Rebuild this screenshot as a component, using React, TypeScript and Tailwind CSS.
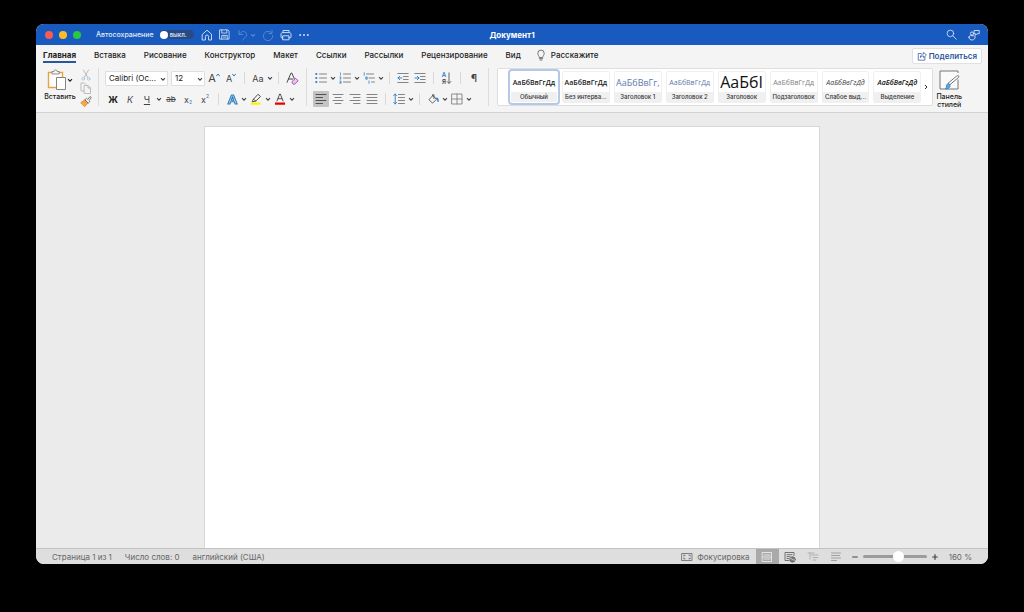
import { useState } from "react";
import type { ReactNode } from "react";
import clsx from "clsx";

const TABS = [
  "Главная",
  "Вставка",
  "Рисование",
  "Конструктор",
  "Макет",
  "Ссылки",
  "Рассылки",
  "Рецензирование",
  "Вид",
];

const STYLES = [
  { label: "Обычный", sample: "АаБбВвГгДд", look: "text-[7px] font-semibold text-[#222]" },
  { label: "Без интерва...", sample: "АаБбВвГгДд", look: "text-[7px] font-semibold text-[#222]" },
  { label: "Заголовок 1", sample: "АаБбВвГг,", look: "text-[9px] text-[#5b7ca8]" },
  { label: "Заголовок 2", sample: "АаБбВвГгДд", look: "text-[7px] font-medium text-[#5b7ca8]" },
  { label: "Заголовок", sample: "АаБбІ", look: "text-[16px] text-[#111]" },
  { label: "Подзаголовок", sample: "АаБбВвГгДд", look: "text-[7px] font-medium text-[#808080]" },
  { label: "Слабое выд...", sample: "АаБбВвГгДд", look: "text-[7px] font-medium italic text-[#444]" },
  { label: "Выделение", sample: "АаБбВвГгДд", look: "text-[7px] font-semibold italic text-[#111]" },
];

function Icon({ children, size = 12, className }: { children: ReactNode; size?: number; className?: string }) {
  return (
    <svg
      width={size}
      height={size}
      viewBox="0 0 12 12"
      fill="none"
      stroke="currentColor"
      strokeWidth="0.9"
      strokeLinecap="round"
      strokeLinejoin="round"
      className={clsx("shrink-0", className)}
      aria-hidden="true"
    >
      {children}
    </svg>
  );
}

function Chevron() {
  return (
    <svg width="6" height="6" viewBox="0 0 6 6" fill="none" stroke="currentColor" strokeWidth="1.1" aria-hidden="true">
      <path d="M1 2.200 3 4.200l2-2" />
    </svg>
  );
}

function Tool({ label, active, children }: { label: string; active?: boolean; children: ReactNode }) {
  return (
    <button
      type="button"
      aria-label={label}
      className={clsx(
        "flex h-4 w-4 shrink-0 items-center justify-center rounded-[1px] leading-none",
        active && "bg-[#c4c4c4]",
      )}
    >
      {children}
    </button>
  );
}

function Drop({ label }: { label: string }) {
  return (
    <button type="button" aria-label={label} className="-ml-px flex h-4 w-[7px] shrink-0 items-center justify-center text-[#444]">
      <Chevron />
    </button>
  );
}

function Sep() {
  return <span className="mx-1 h-3 w-px shrink-0 bg-[#d9d9d9]" />;
}

function GroupSep() {
  return <span className="h-[38px] w-px shrink-0 bg-[#dcdcdc]" />;
}

function TitleBar() {
  return (
    <header className="grid h-[21px] shrink-0 grid-cols-[1fr_auto_1fr] items-center bg-[#185abd] px-2 text-white">
      <div className="flex items-center">
        <div className="flex gap-[6px] pl-px">
          <button type="button" aria-label="Закрыть" className="size-2 rounded-full bg-[#fc5b57]" />
          <button type="button" aria-label="Свернуть" className="size-2 rounded-full bg-[#fdbc2e]" />
          <button type="button" aria-label="Развернуть" className="size-2 rounded-full bg-[#28c840]" />
        </div>
        <label className="ml-[15px] flex items-center gap-[6px] text-[7px] font-medium leading-[9px] text-[#e3ecf8]">
          Автосохранение
          <input type="checkbox" className="peer sr-only" />
          <span className="flex h-[9px] w-[34px] items-center gap-[2px] rounded-full bg-[#2a4a86] text-[6px] font-semibold text-[#d5e0f2]">
            <span className="size-2 rounded-full bg-white" />
            выкл.
          </span>
        </label>
        <div className="ml-[7px] flex items-center gap-[6px] text-[#dbe6f7]">
          <button type="button" aria-label="Домой">
            <Icon>
              <path d="M1.500 5.200 6 1.200l4.500 4V11H7.600V7.600a1.600 1.600 0 0 0-3.200 0V11H1.500z" />
            </Icon>
          </button>
          <button type="button" aria-label="Сохранить">
            <Icon size={11}>
              <path d="M1 1h8.600L11 2.400V11H1zM3 1v3.400h5.600V1M3 11V7h6v4M4.600 8.800h2.800" />
            </Icon>
          </button>
          <div className="flex items-center gap-px pl-px text-[#5d8bd2]">
            <button type="button" aria-label="Отменить">
              <Icon>
                <path d="M2 1.500v4h4M2.200 5.300C4 2.600 6.500 1.800 8.400 3.100c2 1.500 1.500 3.700 0 5.200L5.600 11" />
              </Icon>
            </button>
            <Chevron />
          </div>
          <button type="button" aria-label="Повторить" className="text-[#5d8bd2]">
            <Icon>
              <path d="M10 1.500v3H7M9.900 4.300A4.700 4.700 0 1 0 10.700 6.500" />
            </Icon>
          </button>
          <button type="button" aria-label="Печать">
            <Icon>
              <path d="M3 3.600V1.500h6v2.100M3 8.800H1.800A.8.800 0 0 1 1 8V5.200c0-.9.7-1.600 1.600-1.600h6.800c.9 0 1.600.7 1.600 1.600V8a.8.800 0 0 1-.8.800H9M3 6.800h6v4H3z" />
            </Icon>
          </button>
          <button type="button" aria-label="Ещё">
            <Icon>
              <path d="M2.200 6h.01M6 6h.01M9.800 6h.01" strokeWidth="1.900" />
            </Icon>
          </button>
        </div>
      </div>
      <h1 className="text-[8px] font-bold">Документ1</h1>
      <div className="flex items-center justify-end gap-[11px] text-[#dbe6f7]">
        <button type="button" aria-label="Поиск">
          <Icon size={11}>
            <circle cx="4.800" cy="4.800" r="3.600" />
            <path d="m7.500 7.500 3.700 3.700" />
          </Icon>
        </button>
        <button type="button" aria-label="Совместная работа">
          <Icon>
            <circle cx="4" cy="4.500" r="1.600" />
            <path d="M1 8.200c0-1 .6-1.500 1.500-1.500h3.300c.8 0 1.300.5 1.300 1.200 0 2-1.300 3.100-3 3.100S1 10 1 8.200zM6.500 1.500h4.700v3.300H9L7.500 6.200V4.800h-1z" />
          </Icon>
        </button>
      </div>
    </header>
  );
}

function TabRow() {
  const [current, setCurrent] = useState("Главная");
  return (
    <nav className="flex h-[21px] shrink-0 items-start pl-[7px] pr-[6px] text-[8px] font-medium text-[#222]">
      <div className="flex gap-[18px]">
        {TABS.map((tab) => (
          <button
            key={tab}
            type="button"
            onClick={() => setCurrent(tab)}
            className={clsx(
              "h-[18px] whitespace-nowrap border-b-2 pt-[3px]",
              tab === current ? "border-[#2b579a] font-bold" : "border-transparent",
            )}
          >
            {tab}
          </button>
        ))}
      </div>
      <button type="button" className="ml-[14px] flex h-[18px] items-center gap-1 pt-px">
        <Icon className="text-[#666]">
          <path d="M4.300 8.200C4.300 6.900 2.800 6.200 2.800 4.300a3.200 3.200 0 0 1 6.400 0c0 1.900-1.500 2.600-1.500 3.900zM4.500 9.600h3M5 11h2" />
        </Icon>
        Расскажите
      </button>
      <button
        type="button"
        className="ml-auto mt-[3px] flex h-4 items-center gap-[2px] rounded-[2px] border border-[#e1e1e1] bg-white px-1 font-semibold text-[#2b579a]"
      >
        <Icon size={10}>
          <path d="M5 3H1.500v8h8V7.500M4 7.500c.3-2.600 1.800-4 4-4V1.600L11.300 5 8 8V6C6.300 6 5 6.400 4 7.500z" />
        </Icon>
        Поделиться
      </button>
    </nav>
  );
}

function Clipboard() {
  return (
    <div className="flex shrink-0 gap-1 pt-px">
      <div className="flex w-8 flex-col items-center">
        <div className="flex items-center">
          <button type="button" aria-label="Вставить">
            <svg width="20" height="22" viewBox="0 0 20 22" fill="none" aria-hidden="true">
              <path d="M1.500 3.500h14v15h-14z" fill="#fff" stroke="#e8a33d" strokeWidth="1.400" />
              <path d="M5 5V2.500h2a1.600 1.600 0 0 1 3.200 0h2V5z" fill="#f4f4f4" stroke="#777" strokeWidth="0.800" />
              <path d="M9.500 8.500h9v12h-9z" fill="#fff" stroke="#777" strokeWidth="0.900" />
            </svg>
          </button>
          <Chevron />
        </div>
        <span className="mt-[2px] text-[7px] font-medium leading-[8px]">Вставить</span>
      </div>
      <div className="flex flex-col items-center gap-px">
        <button type="button" aria-label="Вырезать" className="text-[#b5b5b5]">
          <Icon>
            <path d="m3.500 1 4.300 7.500M8.500 1 4.200 8.500" />
            <circle cx="3.300" cy="9.800" r="1.300" stroke="#a9c6e2" />
            <circle cx="8.700" cy="9.800" r="1.300" stroke="#a9c6e2" />
          </Icon>
        </button>
        <button type="button" aria-label="Копировать" className="text-[#b5b5b5]">
          <Icon>
            <path d="M4 9H1V1h3.500L6 2.500M4.500 3.500H8L10.500 6v5.500h-6zM8 3.500V6h2.500" />
          </Icon>
        </button>
        <button type="button" aria-label="Формат по образцу">
          <Icon>
            <path d="M1 7.500 5 4.800l3 3.100-3.200 3.600z" fill="#f3a64b" stroke="#e08e2c" />
            <path d="m5.200 4.500 1.300-1.200 1.300 1.200 2.200-3 1.300 1.100-2.200 2.800.8 1.200-1.400 1.300z" fill="#fff" stroke="#555" strokeWidth="0.800" />
          </Icon>
        </button>
      </div>
    </div>
  );
}

function FontGroup() {
  return (
    <div className="flex shrink-0 flex-col gap-[5px] pt-[2px] text-[#444]">
      <div className="flex h-4 items-center gap-px">
        <div className="relative mr-[2px]">
          <select
            aria-label="Шрифт"
            className="block h-[15px] w-[63px] appearance-none rounded-[1px] border border-[#dedede] bg-white pl-[3px] text-[8px] leading-none text-[#222]"
          >
            <option>Calibri (Ос...</option>
          </select>
          <span className="pointer-events-none absolute right-[2px] top-[5px]">
            <Chevron />
          </span>
        </div>
        <div className="relative">
          <select
            aria-label="Размер шрифта"
            className="block h-[15px] w-[34px] appearance-none rounded-[1px] border border-[#dedede] bg-white pl-[3px] text-[8px] leading-none text-[#222]"
          >
            <option>12</option>
          </select>
          <span className="pointer-events-none absolute right-[2px] top-[5px]">
            <Chevron />
          </span>
        </div>
        <Tool label="Увеличить размер">
          <span className="text-[11px]">A</span>
          <Icon size={4} className="mb-[6px] text-[#2b7cc4]">
            <path d="m1 9 5-6 5 6" strokeWidth="3" />
          </Icon>
        </Tool>
        <Tool label="Уменьшить размер">
          <span className="text-[9px]">A</span>
          <Icon size={4} className="mb-[6px] text-[#2b7cc4]">
            <path d="m1 3 5 6 5-6" strokeWidth="3" />
          </Icon>
        </Tool>
        <Sep />
        <Tool label="Регистр">
          <span className="text-[9px]">Aa</span>
        </Tool>
        <Drop label="Варианты регистра" />
        <Sep />
        <Tool label="Очистить формат">
          <Icon size={13}>
            <path d="M1 9.500 4.600 1h.8l2.400 5.500M2.300 6.500h3.900" />
            <path d="m5.600 8.900 3.200-3.200 2.400 2.400L8 11.200H7z" fill="#e7c8ea" stroke="#a64fb0" />
          </Icon>
        </Tool>
      </div>
      <div className="flex h-4 items-center gap-px">
        <Tool label="Полужирный">
          <span className="text-[9px] font-bold text-[#222]">Ж</span>
        </Tool>
        <Tool label="Курсив">
          <span className="text-[9px] italic">К</span>
        </Tool>
        <Tool label="Подчёркнутый">
          <span className="text-[9px] underline">Ч</span>
        </Tool>
        <Drop label="Варианты подчёркивания" />
        <Tool label="Зачёркнутый">
          <span className="text-[8px] line-through">ab</span>
        </Tool>
        <Tool label="Подстрочный">
          <span className="text-[9px]">x</span>
          <span className="mt-[6px] text-[5px] text-[#2b7cc4]">2</span>
        </Tool>
        <Tool label="Надстрочный">
          <span className="text-[9px]">x</span>
          <span className="mb-[6px] text-[5px] text-[#2b7cc4]">2</span>
        </Tool>
        <Sep />
        <Tool label="Текстовые эффекты">
          <Icon size={11}>
            <path d="M.8 11 4.800 1h2.400l4 10H8.800L8 8.500H4L3.200 11zM4.700 6.700h2.600L6 3z" fill="#a9d3f0" stroke="#2b7cb4" strokeWidth="1.100" />
          </Icon>
        </Tool>
        <Drop label="Варианты эффектов" />
        <Tool label="Цвет выделения">
          <Icon>
            <path d="M1 9.500h9.500v2.300H1z" fill="#fff200" stroke="none" />
            <path d="M3.500 6.200 8 1.300l2.500 2.200-4.700 4.600-3.300.6zM3.500 6.200l2.300 1.900" />
          </Icon>
        </Tool>
        <Drop label="Цвета выделения" />
        <Tool label="Цвет текста">
          <Icon>
            <path d="M1 9.500h10v2.300H1z" fill="#e60000" stroke="none" />
            <path d="M3 8 5.700 1h.6L9 8M4 5.700h4" />
          </Icon>
        </Tool>
        <Drop label="Цвета текста" />
      </div>
    </div>
  );
}

function ParagraphGroup() {
  return (
    <div className="flex shrink-0 flex-col gap-[5px] pt-[2px] text-[#777]">
      <div className="flex h-4 items-center gap-px">
        <Tool label="Маркеры">
          <Icon>
            <path d="M4.500 2h7M4.500 6h7M4.500 10h7" />
            <path d="M1.300 2h.01M1.300 6h.01M1.300 10h.01" stroke="#2b7cc4" strokeWidth="2.200" />
          </Icon>
        </Tool>
        <Drop label="Виды маркеров" />
        <Tool label="Нумерация">
          <Icon>
            <path d="M4.500 2h7M4.500 6h7M4.500 10h7" />
            <path d="M1.500.8v2.400M.8 5h1.200v1L.8 7h1.200M.8 9h1.200v2.300H.8M1 10.200h1" stroke="#2b7cc4" strokeWidth="0.700" />
          </Icon>
        </Tool>
        <Drop label="Виды нумерации" />
        <Tool label="Многоуровневый список">
          <Icon>
            <path d="M3.500 2h7M6 6h5.500M8.500 10h3" />
            <path d="M1.200.8v2.400M3.200 5h1v2.200h-1zM6 9v2.300" stroke="#2b7cc4" strokeWidth="0.800" />
          </Icon>
        </Tool>
        <Drop label="Виды списков" />
        <Sep />
        <Tool label="Уменьшить отступ">
          <Icon>
            <path d="M.8 1.500h10.400M6.500 4.500h4.700M6.500 7.500h4.700M.8 10.500h10.400" />
            <path d="M5 6H1m1.700-1.700L1 6l1.700 1.700" stroke="#2b7cc4" />
          </Icon>
        </Tool>
        <Tool label="Увеличить отступ">
          <Icon>
            <path d="M.8 1.500h10.400M6.500 4.500h4.700M6.500 7.500h4.700M.8 10.500h10.400" />
            <path d="M1 6h4M3.300 4.300 5 6 3.300 7.700" stroke="#2b7cc4" />
          </Icon>
        </Tool>
        <Sep />
        <Tool label="Сортировка">
          <span className="flex flex-col text-[6px] font-semibold leading-[7px]">
            <span className="text-[#2b7cc4]">А</span>
            <span className="text-[#444]">Я</span>
          </span>
          <svg width="6" height="12" viewBox="0 0 6 12" fill="none" stroke="#555" strokeWidth="0.9" aria-hidden="true">
            <path d="M3 .5v11M.8 9.200 3 11.400l2.200-2.200" />
          </svg>
        </Tool>
        <Sep />
        <Tool label="Непечатаемые знаки">
          <span className="text-[10px] font-semibold text-[#444]">¶</span>
        </Tool>
      </div>
      <div className="flex h-4 items-center gap-px">
        <Tool label="По левому краю" active>
          <Icon>
            <path d="M1 1.500h10M1 4.500h6.500M1 7.500h10M1 10.500h6.500" stroke="#444" />
          </Icon>
        </Tool>
        <Tool label="По центру">
          <Icon>
            <path d="M1 1.500h10M3 4.500h6M1 7.500h10M3 10.500h6" />
          </Icon>
        </Tool>
        <Tool label="По правому краю">
          <Icon>
            <path d="M1 1.500h10M4.500 4.500H11M1 7.500h10M4.500 10.500H11" />
          </Icon>
        </Tool>
        <Tool label="По ширине">
          <Icon>
            <path d="M1 1.500h10M1 4.500h10M1 7.500h10M1 10.500h10" />
          </Icon>
        </Tool>
        <Sep />
        <Tool label="Интервал">
          <Icon>
            <path d="M5.500 1.500h6M5.500 4.500h6M5.500 7.500h6M5.500 10.500h6" />
            <path d="M2.200 1v10M.7 2.600 2.200 1l1.500 1.600M.7 9.400 2.200 11l1.500-1.600" stroke="#2b7cc4" />
          </Icon>
        </Tool>
        <Drop label="Варианты интервала" />
        <Sep />
        <Tool label="Заливка">
          <Icon size={11}>
            <path d="M5 2 1 6.200 5 10l4-4zM5 2V.8h1.500V5" stroke="#444" />
            <path d="M9 4.500c1.500 0 2 1.300 2 3.500" stroke="#2b7cc4" strokeWidth="1.600" />
          </Icon>
        </Tool>
        <Drop label="Цвета заливки" />
        <Tool label="Границы">
          <Icon>
            <path d="M1 1h10v10H1zM6 1v10M1 6h10" strokeWidth="0.800" />
          </Icon>
        </Tool>
        <Drop label="Виды границ" />
      </div>
    </div>
  );
}

function StyleGallery() {
  const [selected, setSelected] = useState(0);
  return (
    <div className="ml-2 flex h-[38px] min-w-0 flex-1 items-center rounded-[2px] border border-[#dedede] bg-white pl-[13px]">
      <div className="flex min-w-0 flex-1 gap-[6px]">
        {STYLES.map((style, i) => (
          <button
            key={style.label}
            type="button"
            onClick={() => setSelected(i)}
            className={clsx(
              "flex h-[30px] min-w-0 flex-1 flex-col rounded-[1px] bg-white outline",
              i === selected ? "outline-2 outline-offset-1 outline-[#b4c8e8]" : "outline-1 outline-[#f0f0f0]",
            )}
          >
            <span
              className={clsx(
                "flex h-5 w-full items-center justify-center whitespace-nowrap font-['Open_Sans','Liberation_Sans',sans-serif] leading-none",
                style.look,
              )}
            >
              {style.sample}
            </span>
            <span className="h-[10px] w-full whitespace-nowrap bg-[#f0f0f0] text-center text-[6px] font-medium leading-[9px] text-[#333]">
              {style.label}
            </span>
          </button>
        ))}
      </div>
      <button type="button" aria-label="Другие стили" className="flex w-3 items-center justify-center text-[#333]">
        <svg width="6" height="6" viewBox="0 0 6 6" fill="none" stroke="currentColor" aria-hidden="true">
          <path d="m2 1 2 2-2 2" />
        </svg>
      </button>
    </div>
  );
}

function StylesPane() {
  return (
    <button
      type="button"
      className="ml-[3px] mr-[26px] flex shrink-0 flex-col items-center pt-px text-[7px] font-medium leading-[8px]"
    >
      <svg width="22" height="22" viewBox="0 0 22 22" fill="none" className="mb-[2px]" aria-hidden="true">
        <path d="M20 10.500V20H2V2h18v2" fill="#fafafa" stroke="#777" />
        <path d="m20.500 8.500-8.600 7.200-1.900-1.400L18.700 7c1.600-.9 2.700.2 1.800 1.500z" fill="#fff" stroke="#666" strokeWidth="0.900" />
        <path d="M11.900 15.700c.6 2.300-.7 4.300-4.400 4.300 1.300-1.300.6-4.800 2.600-5.700z" fill="#5ba7e0" stroke="#2b7cc4" strokeWidth="0.800" />
      </svg>
      <span>Панель</span>
      <span>стилей</span>
    </button>
  );
}

function StatusBar() {
  return (
    <footer className="flex h-4 shrink-0 items-center border-t border-[#c2c2c2] bg-[#dedede] px-4 text-[8px] text-[#666]">
      <div className="flex gap-[13px]">
        <span>Страница 1 из 1</span>
        <span>Число слов: 0</span>
        <span>английский (США)</span>
      </div>
      <div className="ml-auto flex h-full items-center">
        <button type="button" className="mr-[6px] flex items-center gap-1">
          <Icon>
            <path d="M1 2.500h10v7H1z" strokeWidth="0.800" />
            <path d="M2.800 5V4.200h1.300M9.200 5V4.200H7.900M2.800 7v.8h1.300M9.200 7v.8H7.900" />
          </Icon>
          Фокусировка
        </button>
        <button
          type="button"
          aria-label="Разметка страницы"
          className="flex h-full w-[23px] items-center justify-center bg-[#a9a9a9] text-[#f4f4f4]"
        >
          <Icon>
            <path d="M1.500 1.500h9v9h-9zM1.500 6h9M3 4h6M3 8h6" strokeWidth="0.800" />
          </Icon>
        </button>
        <button type="button" aria-label="Веб-документ" className="flex w-[23px] justify-center">
          <Icon>
            <path d="M5 9.500H1v-8h9v3M3 3.700h5M3 5.600h3M3 7.500h2" />
            <circle cx="8.500" cy="8.500" r="2.700" fill="#777" />
            <path d="M6.500 7.500c2 0 2 2 4 1.500" stroke="#ddd" />
          </Icon>
        </button>
        <button type="button" aria-label="Структура" className="flex w-[23px] justify-center text-[#aaa]">
          <Icon>
            <path d="M1 2h6M3 2v6M4.500 4H11M6 6.500h5M6 9h3" />
          </Icon>
        </button>
        <button type="button" aria-label="Черновик" className="mr-[3px] flex w-[23px] justify-center text-[#999]">
          <Icon>
            <path d="M1.500 2h9M1.500 4.500h8M1.500 7h9M1.500 9.500h5" />
          </Icon>
        </button>
        <button type="button" aria-label="Уменьшить масштаб" className="text-[#444]">
          <Icon size={8}>
            <path d="M2.500 6h7" strokeWidth="1.800" />
          </Icon>
        </button>
        <input
          type="range"
          aria-label="Масштаб"
          min={0}
          max={100}
          defaultValue={58}
          className="mx-1 h-[3px] w-16 appearance-none rounded-full bg-[#9b9b9b] [&::-webkit-slider-thumb]:size-[11px] [&::-webkit-slider-thumb]:appearance-none [&::-webkit-slider-thumb]:rounded-full [&::-webkit-slider-thumb]:bg-white"
        />
        <button type="button" aria-label="Увеличить масштаб" className="text-[#444]">
          <Icon size={8}>
            <path d="M2.500 6h7M6 2.500v7" strokeWidth="1.800" />
          </Icon>
        </button>
        <span className="ml-[10px]">160 %</span>
      </div>
    </footer>
  );
}

export default function App() {
  return (
    <div className="flex h-screen flex-col bg-black px-9 pb-12 pt-6 font-['Inter','Liberation_Sans',sans-serif] text-[#222]">
      <div className="flex min-h-0 flex-1 flex-col overflow-hidden rounded-lg bg-[#f4f4f4]">
        <TitleBar />
        <TabRow />
        <div className="flex h-[47px] shrink-0 items-start gap-[6px] border-b border-[#d2d2d2] pl-2 pt-[2px]">
          <Clipboard />
          <GroupSep />
          <FontGroup />
          <GroupSep />
          <ParagraphGroup />
          <div className="flex min-w-0 flex-1 items-start">
            <GroupSep />
            <StyleGallery />
            <StylesPane />
          </div>
        </div>
        <main className="flex min-h-0 flex-1 flex-col items-center bg-[#ebebeb] pt-[13px]">
          <article className="w-full max-w-[616px] flex-1 border border-b-0 border-[#d8d8d8] bg-white" />
        </main>
        <StatusBar />
      </div>
    </div>
  );
}
